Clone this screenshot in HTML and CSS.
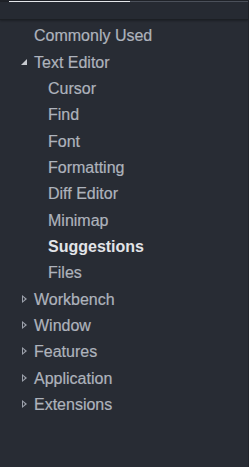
FILE: index.html
```html
<!DOCTYPE html>
<html lang="en">
<head>
    <meta charset="UTF-8">
    <meta name="viewport" content="width=device-width, initial-scale=1.0">
    <title>Settings</title>
    <link rel="stylesheet" href="styles.css">
</head>
<body>
    <div class="panel">
        <div class="tabs">
            <div class="tab-active"></div>
            <div class="tab-rest"></div>
        </div>
        <div class="header"></div>

        <ul class="tree">
            <li class="row leaf">Commonly Used</li>
            <li class="row open"><span class="twisty"></span>Text Editor</li>
            <li class="row child">Cursor</li>
            <li class="row child">Find</li>
            <li class="row child">Font</li>
            <li class="row child">Formatting</li>
            <li class="row child">Diff Editor</li>
            <li class="row child">Minimap</li>
            <li class="row child selected">Suggestions</li>
            <li class="row child">Files</li>
            <li class="row closed"><span class="twisty"></span>Workbench</li>
            <li class="row closed"><span class="twisty"></span>Window</li>
            <li class="row closed"><span class="twisty"></span>Features</li>
            <li class="row closed"><span class="twisty"></span>Application</li>
            <li class="row closed"><span class="twisty"></span>Extensions</li>
        </ul>
    </div>
</body>
</html>
```

FILE: styles.css
```css
html, body {
    margin: 0;
    padding: 0;
    height: 100%;
}

body {
    font-family: "Liberation Sans", Arial, sans-serif;
    background-color: #282c34;
    overflow: hidden;
}

.panel {
    height: 100%;
    border-right: 1px solid #22252c;
}

.tabs {
    display: flex;
    height: 2px;
    background-color: #1f2228;
}

.tab-active {
    margin-left: 9px;
    width: 121px;
    height: 1px;
    margin-top: 1px;
    background-color: #e4e6ea;
}

.tab-rest {
    flex: 1;
    height: 1px;
    margin-top: 1px;
    background-color: #4b505a;
}

.header {
    height: 17px;
    background-color: #262a32;
    border-bottom: 1px solid #1c1f24;
    box-shadow: 0 1px 2px rgba(0, 0, 0, 0.3);
}

.tree {
    list-style: none;
    margin: 0;
    padding: 3px 0 0 0;
}

.row {
    display: flex;
    align-items: center;
    height: 26.36px;
    font-size: 16px;
    color: #aeb3bc;
    padding-left: 34px;
    position: relative;
    -webkit-text-stroke: 0.2px #aeb3bc;
}

.row.child {
    padding-left: 48px;
}

.row.selected {
    font-weight: bold;
    color: #e2e4e8;
    -webkit-text-stroke: 0;
}

.twisty {
    position: absolute;
    left: 21px;
    top: 50%;
}

.open .twisty {
    width: 0;
    height: 0;
    margin-top: -4px;
    border-left: 6px solid transparent;
    border-bottom: 6px solid #c7cad0;
}

.closed .twisty {
    left: 22px;
    margin-top: -5px;
    width: 0;
    height: 0;
    border-top: 4px solid transparent;
    border-bottom: 4px solid transparent;
    border-left: 5px solid #9ca1ab;
}

.closed .twisty::after {
    content: "";
    position: absolute;
    left: -4px;
    top: -2px;
    border-top: 2px solid transparent;
    border-bottom: 2px solid transparent;
    border-left: 2.5px solid #282c34;
}
```
